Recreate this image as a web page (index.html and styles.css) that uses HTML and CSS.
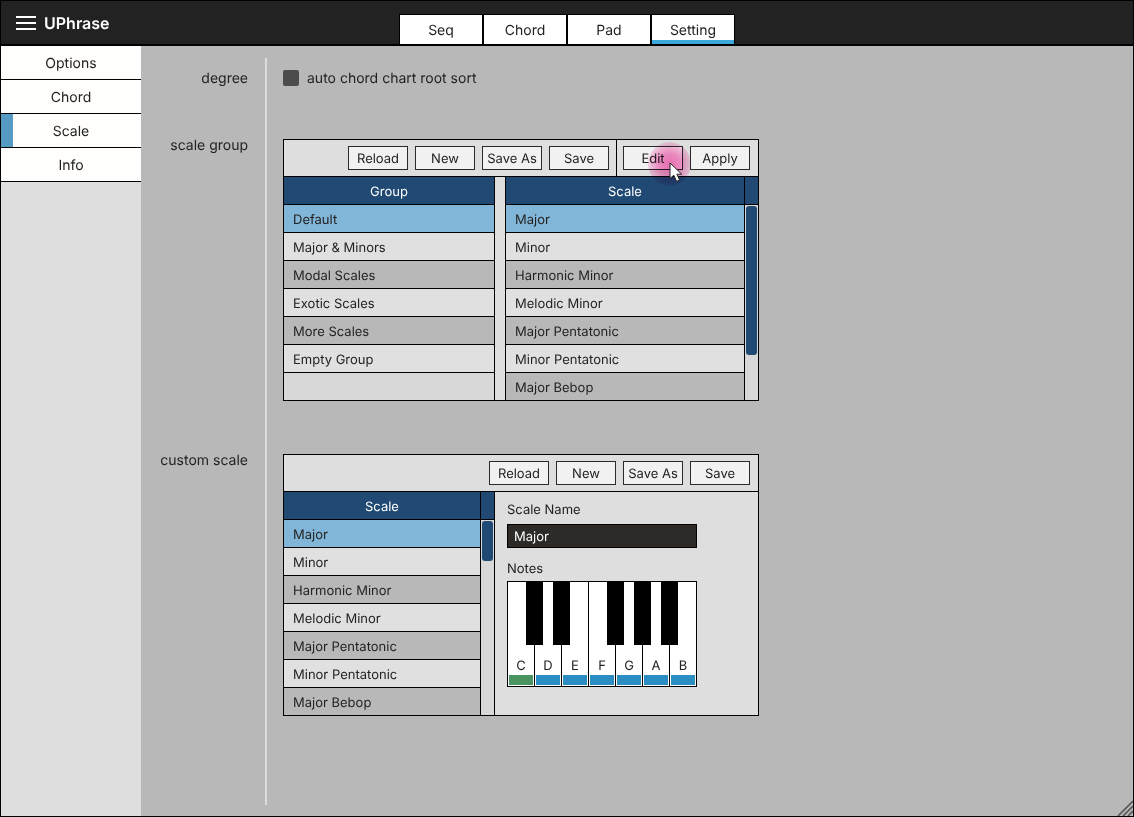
FILE: index.html
```html
<!DOCTYPE html>
<html lang="en">
<head>
<meta charset="utf-8">
<title>UPhrase</title>
<link rel="stylesheet" href="styles.css">
</head>
<body>
<div class="app">
  <header class="topbar">
    <div class="brand">
      <span class="burger"><i></i><i></i><i></i></span>
      <span class="title">UPhrase</span>
    </div>
    <nav class="tabs">
      <div class="tab">Seq</div>
      <div class="tab">Chord</div>
      <div class="tab">Pad</div>
      <div class="tab tab-on">Setting</div>
    </nav>
  </header>
  <div class="main">
    <aside class="side">
      <div class="side-item">Options</div>
      <div class="side-item">Chord</div>
      <div class="side-item side-on">Scale</div>
      <div class="side-item">Info</div>
    </aside>
    <section class="content">
      <div class="row row-degree">
        <div class="label label-degree">degree</div>
        <div class="cell cell-degree">
          <span class="check"></span>
          <span class="check-text">auto chord chart root sort</span>
        </div>
      </div>
      <div class="row row-group">
        <div class="label">scale group</div>
        <div class="cell">
          <div class="panel">
            <div class="toolbar">
              <div class="btns">
                <button class="btn">Reload</button>
                <button class="btn">New</button>
                <button class="btn">Save As</button>
                <button class="btn">Save</button>
              </div>
              <div class="btns btns-sep">
                <button class="btn">Edit</button>
                <button class="btn">Apply</button>
              </div>
            </div>
            <div class="panel-body">
              <div class="list list-group">
                <div class="list-head">Group</div>
                <div class="item sel">Default</div>
                <div class="item">Major &amp; Minors</div>
                <div class="item alt">Modal Scales</div>
                <div class="item">Exotic Scales</div>
                <div class="item alt">More Scales</div>
                <div class="item">Empty Group</div>
                <div class="item blank"></div>
              </div>
              <div class="gutter"></div>
              <div class="list list-scale">
                <div class="list-head">Scale</div>
                <div class="item sel">Major</div>
                <div class="item">Minor</div>
                <div class="item alt">Harmonic Minor</div>
                <div class="item">Melodic Minor</div>
                <div class="item alt">Major Pentatonic</div>
                <div class="item">Minor Pentatonic</div>
                <div class="item alt">Major Bebop</div>
              </div>
              <div class="scroll">
                <div class="scroll-head"></div>
                <div class="thumb thumb-long"></div>
              </div>
            </div>
          </div>
        </div>
      </div>
      <div class="row row-custom">
        <div class="label">custom scale</div>
        <div class="cell">
          <div class="panel">
            <div class="toolbar">
              <div class="btns">
                <button class="btn">Reload</button>
                <button class="btn">New</button>
                <button class="btn">Save As</button>
                <button class="btn">Save</button>
              </div>
            </div>
            <div class="panel-body">
              <div class="list list-custom">
                <div class="list-head">Scale</div>
                <div class="item sel">Major</div>
                <div class="item">Minor</div>
                <div class="item alt">Harmonic Minor</div>
                <div class="item">Melodic Minor</div>
                <div class="item alt">Major Pentatonic</div>
                <div class="item">Minor Pentatonic</div>
                <div class="item alt">Major Bebop</div>
              </div>
              <div class="scroll scroll-custom">
                <div class="scroll-head"></div>
                <div class="thumb thumb-short"></div>
              </div>
              <div class="editor">
                <div class="field-label">Scale Name</div>
                <div class="name-input">Major</div>
                <div class="field-label notes-label">Notes</div>
                <div class="keyboard">
                  <div class="key"><span>C</span><i class="bar bar-root"></i></div>
                  <div class="key"><span>D</span><i class="bar"></i></div>
                  <div class="key"><span>E</span><i class="bar"></i></div>
                  <div class="key"><span>F</span><i class="bar"></i></div>
                  <div class="key"><span>G</span><i class="bar"></i></div>
                  <div class="key"><span>A</span><i class="bar"></i></div>
                  <div class="key"><span>B</span><i class="bar"></i></div>
                  <i class="black b1"></i>
                  <i class="black b2"></i>
                  <i class="black b3"></i>
                  <i class="black b4"></i>
                  <i class="black b5"></i>
                </div>
              </div>
            </div>
          </div>
        </div>
      </div>
    </section>
  </div>
  <div class="glow"></div>
  <svg class="cursor" width="15" height="21" viewBox="0 0 15 21"><path d="M1 1V16.5L4.8 13.2L7.6 19.4L10.6 18L7.9 12.2H12.8Z" fill="#fff" stroke="#222" stroke-width="1"/></svg>
  <svg class="grip" width="16" height="16" viewBox="0 0 16 16"><path d="M1 16L16 1M6 16L16 6M11 16L16 11" stroke="#555" stroke-width="1.6" fill="none"/></svg>
</div>
</body>
</html>
```
FILE: styles.css
```css
* { box-sizing: border-box; }
html, body { margin: 0; padding: 0; }
body { font-family: Inter, "Liberation Sans", sans-serif; font-size: 13px; color: #222; background: #b8b8b8; text-rendering: geometricPrecision; }
.app { position: relative; width: 1134px; height: 817px; border: 1px solid #000; display: flex; flex-direction: column; overflow: hidden; }

.topbar { height: 45px; flex: none; background: #222; border-bottom: 2px solid #000; position: relative; display: flex; justify-content: center; }
.brand { position: absolute; left: 15px; top: 0; height: 43px; display: flex; align-items: center; gap: 8px; }
.burger { width: 20px; height: 14px; display: flex; flex-direction: column; justify-content: space-between; }
.burger i { display: block; height: 2px; background: #fff; }
.title { color: #fff; font-size: 16px; font-weight: 600; }
.tabs { margin-top: 13px; display: flex; gap: 2px; padding: 1px 1px 0; background: #000; height: 30px; }
.tab { position: relative; width: 82px; background: #fff; text-align: center; line-height: 32px; font-size: 14px; }
.tab-on::after { content: ""; position: absolute; left: 0; right: 0; bottom: 0; height: 4px; background: #3da8dc; }

.main { flex: 1; display: flex; min-height: 0; }
.side { width: 140px; flex: none; background: #dedede; }
.side-item { position: relative; height: 34px; background: #fffefc; border-bottom: 1px solid #000; text-align: center; line-height: 35px; font-size: 14px; }
.side-on::before { content: ""; position: absolute; left: 0; top: 0; bottom: 0; width: 12px; background: #559bc4; }

.content { flex: 1; background: #b8b8b8; padding: 12px 0 11px; display: flex; flex-direction: column; font-size: 14px; }
.row { display: grid; grid-template-columns: 124px 1fr; }
.row-degree { height: 81px; }
.row-group { height: 315px; }
.row-custom { flex: 1; }
.label { padding-right: 17px; text-align: right; line-height: 14px; }
.label-degree { padding-top: 14px; }
.cell { border-left: 2px solid #dcdcdc; padding-left: 16px; }
.cell-degree { padding-top: 12px; display: flex; align-items: flex-start; gap: 8px; height: 100%; }
.check { width: 16px; height: 16px; border-radius: 2px; background: #4c4c4c; }
.check-text { line-height: 18px; }

.panel { width: 476px; height: 262px; border: 1px solid #000; background: #dedede; display: flex; flex-direction: column; overflow: hidden; font-size: 13px; }
.toolbar { height: 37px; flex: none; border-bottom: 1px solid #000; display: flex; justify-content: flex-end; }
.btns { display: flex; gap: 7px; align-items: center; padding-right: 7px; }
.btns-sep { border-left: 1px solid #000; padding-left: 6px; padding-right: 8px; }
.toolbar > .btns:only-child { padding-right: 8px; }
.btn { width: 60px; height: 24px; padding: 2px 0 0; border: 1px solid #2a2a2a; background: #f1f1f1; color: #222; font: 13px Inter, "Liberation Sans", sans-serif; text-rendering: geometricPrecision; }

.panel-body { flex: 1; display: flex; min-height: 0; }
.list { overflow: hidden; background: #d8d8d8; border-right: 1px solid #000; flex: none; }
.list-group { width: 211px; }
.list-scale { width: 239px; }
.list-custom { width: 197px; }
.gutter { width: 11px; flex: none; background: #dedede; border-right: 1px solid #000; }
.list-head { height: 28px; background: #204a73; color: #fff; border-bottom: 1px solid #000; text-align: center; line-height: 31px; }
.item { height: 28px; padding-left: 9px; line-height: 31px; background: #e0e0e0; border-bottom: 1px solid #000; }
.alt { background: #b8b8b8; }
.sel { background: #82b6d8; }
.blank { background: #d8d8d8; }
.scroll { flex: 1; background: #d8d8d8; }
.scroll-custom { flex: none; width: 14px; border-right: 1px solid #000; }
.scroll-head { height: 28px; background: #204a73; border-bottom: 1px solid #000; }
.thumb { margin: 1px 0 0 1px; width: 11px; background: #204a73; border-radius: 3px; }
.thumb-long { height: 149px; }
.thumb-short { height: 40px; }

.editor { flex: 1; background: #dedede; padding: 9px 0 0 12px; }
.field-label { height: 16px; line-height: 18px; }
.name-input { width: 190px; height: 24px; margin-top: 7px; background: #2e2a27; border: 1px solid #000; color: #fff; padding-left: 6px; line-height: 24px; }
.notes-label { margin-top: 12px; }
.keyboard { position: relative; width: 190px; height: 106px; margin-top: 5px; border: 1px solid #000; background: #fff; display: flex; }
.key { width: 27px; padding: 0 1px 1px; border-right: 1px solid #000; display: flex; flex-direction: column; justify-content: flex-end; align-items: stretch; text-align: center; line-height: 16px; }
.key:last-of-type { width: 26px; border-right: 0; }
.key span { margin-bottom: 1px; }
.bar { display: block; height: 10px; background: #2b8ec2; }
.bar-root { background: #499460; }
.black { position: absolute; top: 0; width: 17px; height: 63px; background: #000; }
.b1 { left: 18px; }
.b2 { left: 45px; }
.b3 { left: 99px; }
.b4 { left: 126px; }
.b5 { left: 153px; }

.glow { position: absolute; left: 647px; top: 141px; width: 43px; height: 44px; border-radius: 50%; mix-blend-mode: multiply; background: radial-gradient(circle, rgba(245,110,185,.95) 0%, rgba(245,110,185,.75) 35%, rgba(245,110,185,.25) 70%, rgba(245,110,185,0) 100%); }
.cursor { position: absolute; left: 668px; top: 161px; }
.grip { position: absolute; right: 0; bottom: 0; }
```
